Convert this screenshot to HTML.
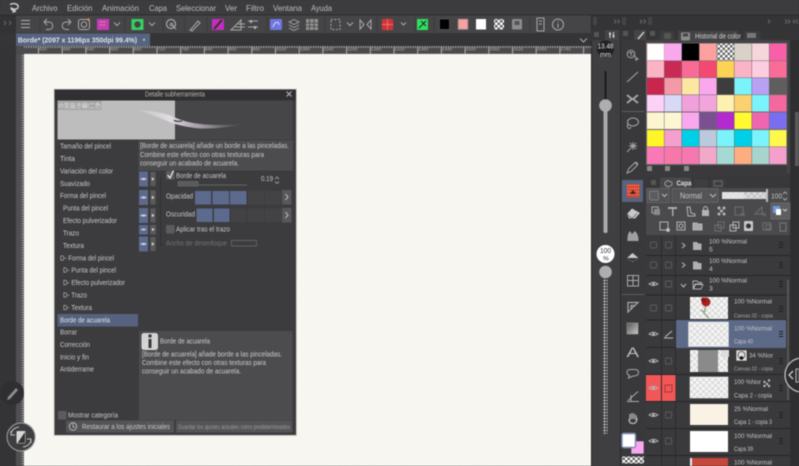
<!DOCTYPE html>
<html><head><meta charset="utf-8"><style>
html,body{margin:0;padding:0;background:#333;width:799px;height:466px;overflow:hidden}
svg{display:block;filter:blur(.5px)}
text{font-family:"Liberation Sans","Noto Sans CJK JP",sans-serif;font-size:7.5px;fill:#c8c8c8}
.m text{font-size:8.5px;fill:#bdbdbd}
.l text{font-size:7.2px;fill:#c8c8c8}
.d text{font-size:7.2px;fill:#cccccc}
.i{fill:none;stroke:#a8a8a8;stroke-width:1}
.r text{font-size:6.8px;fill:#c4c4c4}
.r .s{font-size:5.8px;fill:#aaa}
.t text{font-size:4.6px;fill:#b0b0b0}
</style></head><body>
<svg width="799" height="466" viewBox="0 0 799 466" xmlns="http://www.w3.org/2000/svg">
<defs>
<pattern id="ck" width="6" height="6" patternUnits="userSpaceOnUse"><rect width="6" height="6" fill="#f6f6f6"/><rect width="3" height="3" fill="#dcdcdc"/><rect x="3" y="3" width="3" height="3" fill="#dcdcdc"/></pattern>
<pattern id="ck2" width="5" height="5" patternUnits="userSpaceOnUse"><rect width="5" height="5" fill="#fff"/><rect width="2.5" height="2.5" fill="#666"/><rect x="2.5" y="2.5" width="2.5" height="2.5" fill="#666"/></pattern>
<pattern id="tick" width="2.37" height="8" patternUnits="userSpaceOnUse" x="38"><rect y="5.500" width=".9" height="2.500" fill="#b0b0b0"/></pattern>
<pattern id="tick2" width="23.7" height="8" patternUnits="userSpaceOnUse" x="38"><rect y="0" width="1" height="8" fill="#b4b4b4"/></pattern>
<pattern id="vt" width="8" height="2.4" patternUnits="userSpaceOnUse"><rect x="5.500" width="2.500" height=".9" fill="#a8a8a8"/></pattern>
<pattern id="bead" width="3" height="3" patternUnits="userSpaceOnUse"><rect width="3" height="3" fill="#444"/><circle cx="1.5" cy="1.5" r="1" fill="#ccc"/></pattern>
<linearGradient id="grd" x1="0" y1="0" x2="1" y2="1"><stop offset="0" stop-color="#555"/><stop offset="1" stop-color="#c8c8c8"/></linearGradient>
<linearGradient id="st" x1="0" y1="0" x2="1" y2="0"><stop offset="0" stop-color="#d8d6da" stop-opacity=".3"/><stop offset=".3" stop-color="#e2dce4"/><stop offset=".45" stop-color="#c0b4c4"/><stop offset=".7" stop-color="#8a868a"/><stop offset="1" stop-color="#5a5a5c" stop-opacity=".2"/></linearGradient>
<filter id="paper" x="0" y="0" width="100%" height="100%"><feTurbulence type="fractalNoise" baseFrequency=".7" numOctaves="2" seed="3"/><feColorMatrix values="0 0 0 0 .55 0 0 0 0 .52 0 0 0 0 .45 .5 0 0 0 -.12"/></filter>
<g id="eye"><path d="M-4.500 0Q0-3.500 4.500 0Q0 3 -4.500 0Z" fill="none" stroke="#b4b4b4" stroke-width=".9"/><circle r="1.300" fill="#b4b4b4"/></g>
<g id="cb"><rect x="-3" y="-3" width="6" height="6" rx="1" fill="none" stroke="#5a5a5c" stroke-width="1"/></g>
<g id="grip"><path d="M-2-2.500H2M-2 0H2M-2 2.500H2" stroke="#1e1e20" stroke-width="1.100"/></g>
<g id="ebtn"><rect x="-4.500" y="-7.500" width="9" height="15" fill="#5c6a8e"/><path d="M-3.500 0Q0-2.600 3.500 0Q0 2.400 -3.500 0Z" fill="#c8ccd8"/></g>
<g id="pbtn"><rect x="-3" y="-7.500" width="6" height="15" fill="#5a5a5c" stroke="#333" stroke-width=".5"/><path d="M-1.200-1.800L1.500 0L-1.200 1.800Z" fill="#ddd"/></g>
</defs>

<!-- base -->
<rect width="799" height="466" fill="#353537"/>
<rect x="0" y="0" width="799" height="15" fill="#3c3c3e"/>
<rect x="0" y="14.500" width="799" height="1" fill="#2c2c2c"/>
<rect x="0" y="15.500" width="591" height="18" fill="#454547"/>
<rect x="0" y="33" width="591" height="13" fill="#353537"/>
<rect x="0" y="46" width="16" height="420" fill="#343436"/>
<rect x="0" y="15.500" width="16" height="18" fill="#333335"/>

<!-- canvas -->
<rect x="24" y="54" width="567" height="412" fill="#faf8f3"/>
<rect x="24" y="54" width="567" height="412" filter="url(#paper)" opacity=".22"/>

<!-- rulers -->
<rect x="16" y="46" width="575" height="8" fill="#4b4b4d"/>
<rect x="24" y="46" width="567" height="8" fill="url(#tick)"/>
<rect x="24" y="46" width="567" height="8" fill="url(#tick2)"/>
<rect x="16" y="54" width="8" height="412" fill="#505052"/>
<rect x="16" y="54" width="8" height="412" fill="url(#vt)"/>
<g class="t">
<text x="39" y="50.500">420</text><text x="62.700" y="50.500">480</text><text x="86.400" y="50.500">540</text><text x="110.100" y="50.500">600</text><text x="133.800" y="50.500">660</text><text x="157.500" y="50.500">720</text><text x="181.200" y="50.500">780</text><text x="204.900" y="50.500">840</text><text x="228.600" y="50.500">900</text><text x="252.300" y="50.500">960</text><text x="276" y="50.500">1020</text><text x="299.700" y="50.500">1080</text><text x="323.400" y="50.500">1140</text><text x="347.100" y="50.500">1200</text><text x="370.800" y="50.500">1260</text><text x="394.500" y="50.500">1320</text><text x="418.200" y="50.500">1380</text><text x="441.900" y="50.500">1440</text><text x="465.600" y="50.500">1500</text><text x="489.300" y="50.500">1560</text><text x="513" y="50.500">1620</text><text x="536.700" y="50.500">1680</text><text x="560.400" y="50.500">1740</text>
</g>

<!-- logo -->
<path d="M10 4.500C14 2.500 19 4 18 7.500C17 10 12 9.500 11 7.500M11 7.500C11 9.500 13 11 16 11.500M15 8.500C15 11 14 12.500 12.500 12" fill="none" stroke="#d0d0d0" stroke-width="1.400"/>

<!-- menu -->
<g class="m">
<text x="32" y="11" textLength="25.500" lengthAdjust="spacingAndGlyphs">Archivo</text>
<text x="67" y="11" textLength="25.500" lengthAdjust="spacingAndGlyphs">Edición</text>
<text x="102" y="11" textLength="37" lengthAdjust="spacingAndGlyphs">Animación</text>
<text x="149" y="11" textLength="18" lengthAdjust="spacingAndGlyphs">Capa</text>
<text x="176" y="11" textLength="40" lengthAdjust="spacingAndGlyphs">Seleccionar</text>
<text x="225" y="11" textLength="12" lengthAdjust="spacingAndGlyphs">Ver</text>
<text x="246" y="11" textLength="18" lengthAdjust="spacingAndGlyphs">Filtro</text>
<text x="273" y="11" textLength="29" lengthAdjust="spacingAndGlyphs">Ventana</text>
<text x="311" y="11" textLength="21" lengthAdjust="spacingAndGlyphs">Ayuda</text>
</g>

<!-- toolbar separators -->
<path d="M40 17V32M125 17V32M163 17V32M185 17V32M207 17V32M267 17V32M325 17V32M377 17V32M415 17V32M434 17V32M530 17V32" stroke="#3b3b3d" stroke-width="1"/>
<path d="M21 20.500H30M21 24H30M21 27.500H30" stroke="#b0b0b0" stroke-width="1.100"/>
<g class="i">
<path d="M44 22L47 19M44 22L47 25M44 22H49C54 22 54 29.500 49 29.500H46"/>
<path d="M71 22L68 19M71 22L68 25M71 22H66C61 22 61 29.500 66 29.500H69"/>
<rect x="78.500" y="19.500" width="11" height="10" rx="2"/><circle cx="84" cy="24.500" r="2.800"/>
<path d="M114 22.500L117 25.500L120 22.500M149 22.500L152 25.500L155 22.500M347 22.500L350 25.500L353 22.500"/>
<circle cx="171" cy="24" r="4.500" stroke-width="1.200"/><path d="M172 25L176 29" stroke-width="1.200"/><circle cx="171.500" cy="24.500" r="1.300"/>
<path d="M190 30L193 27L198 21L200 23L195 28L192 31Z"/>
<path d="M231 30L241 20V30ZM235 27H245M238 24H245"/>
<path d="M248 21H258M248 27H258"/>
<path d="M289 22L294 19.500L299 22L294 24.500ZM289 25L294 27.500L299 25M289 28L294 30.500L299 28" stroke-width=".9"/>
<rect x="331" y="19.500" width="9" height="10" stroke-dasharray="2 1.500"/>
<path d="M360 20V29L364 24.500ZM371 20V29L367 24.500Z"/>
<path d="M401 22.500L403.500 25L406 22.500"/>
<rect x="537" y="18" width="7" height="13"/><path d="M539 21H542M539 24H542"/>
<circle cx="558" cy="24.500" r="5.500"/><path d="M558 23.500V28M558 21V22"/>
</g>
<circle cx="88.500" cy="19.500" r="1.300" fill="#e85"/>
<rect x="97" y="19" width="12" height="11" fill="#c53cb5"/><path d="M100 22H106M100 25H106" stroke="#e8c060" stroke-width="1" stroke-dasharray="1 1"/>
<rect x="131.500" y="19" width="12" height="11" fill="#35d060"/><circle cx="137.500" cy="24.500" r="3.200" fill="#454547"/>
<rect x="212" y="19" width="12" height="11" fill="#c52cc0"/><path d="M214 29L222 20" stroke="#332" stroke-width="2"/>
<rect x="250" y="20" width="2" height="3" fill="#b0b0b0"/><rect x="254" y="26" width="2" height="3" fill="#b0b0b0"/>
<rect x="270" y="19" width="12" height="11" rx="1.500" fill="#7076e0"/><path d="M273 27C275 21 279 21 279 25" stroke="#d8d8f8" fill="none"/>
<rect x="306" y="19" width="12" height="11" fill="#909090"/><path d="M309.500 19V30M314 19V30M306 23H318M306 26.500H318" stroke="#444" stroke-width=".8"/>
<rect x="382" y="19" width="11" height="11" fill="#d63236"/><path d="M382 24.500H393M387.500 19V30" stroke="#fff" stroke-dasharray=".8 1.200" stroke-width=".7"/>
<rect x="417" y="19" width="11" height="11" fill="#2fe060"/><path d="M419 28L426 21M421 21L426 26" stroke="#222" stroke-width="1"/>
<rect x="439.500" y="19" width="10" height="10.500" fill="#000" stroke="#555" stroke-width=".8"/>
<rect x="458" y="19" width="10" height="10.500" fill="#f5a2a0" stroke="#777" stroke-width=".8"/>
<rect x="476" y="19" width="10" height="10.500" fill="#fff"/>
<rect x="494" y="19" width="10" height="10.500" fill="url(#ck2)"/>
<rect x="512" y="19" width="10" height="10.500" rx="1" fill="#8c8c8c"/><rect x="514.500" y="21" width="5" height="4" fill="#555"/>

<!-- tab -->
<rect x="16" y="33.500" width="134" height="12.500" fill="#566480"/>
<text x="18" y="42.500" textLength="119" lengthAdjust="spacingAndGlyphs" style="fill:#dfe2e8;font-size:7.6px;font-weight:bold">Borde* (2097 x 1196px 350dpi 99.4%)</text>
<circle cx="144" cy="39.800" r="1" fill="#d8d8d8"/>
<path d="M580 38.500L583.500 42L587 38.500" fill="none" stroke="#aaa" stroke-width="1"/>
<path d="M4 21L6 23L4 25M9 21L11 23L9 25" fill="none" stroke="#666" stroke-width=".9"/>

<!-- right panels -->
<rect x="591" y="15.500" width="208" height="14.500" fill="#343436"/>
<path d="M614 19.500L616 21.500L614 23.500M617.500 19.500L619.500 21.500L617.500 23.500M640 19.500L642 21.500L640 23.500M643.500 19.500L645.500 21.500L643.500 23.500M768 19.500L770 21.500L768 23.500M785 19.500L787 21.500L785 23.500M788 19.500L790 21.500L788 23.500M795 19.500L793 21.500L795 23.500M798 19.500L796 21.500L798 23.500" fill="none" stroke="#777" stroke-width=".8"/>
<rect x="593" y="17" width="4" height="8" fill="#444"/><rect x="622" y="17" width="4" height="8" fill="#444"/><rect x="648" y="17" width="4" height="8" fill="#444"/>
<rect x="591" y="30" width="29" height="436" fill="#3f3f41"/>
<rect x="620" y="30" width="26" height="436" fill="#39393b"/>
<rect x="646" y="30" width="144" height="436" fill="#444446"/>
<rect x="790" y="30" width="9" height="436" fill="#2f2f31"/>
<rect x="795" y="112" width="4" height="54" fill="#5a5a5c"/>
<rect x="591" y="15.500" width="1" height="450" fill="#2a2a2a"/>
<rect x="620" y="30" width="1" height="436" fill="#2c2c2e"/>
<!-- top right tabs -->
<rect x="591" y="30" width="208" height="10" fill="#353537"/>
<rect x="594" y="32" width="5" height="5" fill="#555"/>
<rect x="605" y="30" width="14" height="10" fill="#444446"/>
<path d="M610 32V38M613.500 32V38" stroke="#ccc" stroke-width="1.100"/><rect x="609" y="33" width="2" height="2" fill="#ccc"/><rect x="612.500" y="35" width="2" height="2" fill="#ccc"/>
<rect x="623" y="31" width="5" height="5" fill="#555"/>
<rect x="634" y="30" width="12" height="10" fill="#444446"/><path d="M638 39L644 32" stroke="#ccc" stroke-width="1.500"/>
<rect x="650" y="31" width="5" height="5" fill="#555"/>
<path d="M660 40V33Q660 31 662 31H672Q674 31 674 33V40Z" fill="#3d3d3f"/><rect x="664" y="33" width="7" height="6" rx="1" fill="#555"/>
<path d="M678 40V31H738V40Z" fill="#444446"/><rect x="681" y="32.500" width="9" height="8" rx="1" fill="#8a8a8a"/><rect x="683" y="33.500" width="5" height="3" fill="#444"/>
<text x="695" y="38.500" textLength="46" lengthAdjust="spacingAndGlyphs" style="fill:#d4d4d4;font-size:7.500px">Historial de color</text>
<path d="M744 40V31H760V40Z" fill="#3d3d3f"/><rect x="747" y="33" width="9" height="5" fill="#777"/>

<!-- brush size -->
<circle cx="605.500" cy="49" r="8.500" fill="#202022"/>
<text x="597.500" y="48.500" textLength="16" lengthAdjust="spacingAndGlyphs" style="fill:#e8e8e8;font-size:7.500px">13.48</text>
<text x="600" y="57" textLength="11" lengthAdjust="spacingAndGlyphs" style="fill:#e8e8e8;font-size:7px">mm</text>
<rect x="604.500" y="71" width="2" height="35" fill="#1c1c1e"/>
<rect x="603.500" y="105" width="4" height="128" rx="1.500" fill="#aaa"/>
<circle cx="605.500" cy="105.500" r="6.300" fill="#aeaeae"/>
<circle cx="605.500" cy="254" r="9" fill="#fff"/>
<text x="600" y="253" textLength="11" lengthAdjust="spacingAndGlyphs" style="fill:#333;font-size:7.200px">100</text>
<text x="603" y="260.500" style="fill:#333;font-size:6.500px">%</text>
<circle cx="605.500" cy="272" r="6.300" fill="#aeaeae"/>
<rect x="603.500" y="278" width="4" height="156" rx="1.500" fill="url(#bead)"/>

<!-- tool column -->
<g class="i" stroke-width="1">
<circle cx="631" cy="54" r="3.800" stroke-width="1"/><path d="M629 52.500H633M631 52.500V56M633 55L638 59L635.500 59L636.500 61" stroke-width=".9"/>
<path d="M627 82L638 72"/>
<path d="M627 95L632 99L627 103M638 95L633 99L638 103M632 99H633" stroke-width="1.800"/>
<ellipse cx="633" cy="122" rx="5.500" ry="4" stroke-width="1"/><path d="M628 124C626 128 630 130 631 127"/>
<path d="M627 152L632 147M633 142V150M629 146H637M630 143L636 149M636 143L630 149" stroke-width=".9"/>
<path d="M627 173L628.500 169L635 162.500L637.500 165L631 171.500ZM636 162L638 164"/>
<path d="M622 111.500H644" stroke="#5d5d5f"/>
<path d="M622 294.500H644" stroke="#5d5d5f"/>
<rect x="627.500" y="275.500" width="11" height="10.500"/><path d="M627.500 280.500H638.500M633 275.500V286"/>
<path d="M628 312V302.500H638ZM631 309V305.500H634.500" stroke-width="1.200"/>
<path d="M627 401.500H639M628 400.500L638 391.500M631 401V395"/>
<path d="M630.500 369.500L635 369.500Q638.500 369.500 638.500 372.500Q638.500 376 633 376L628.500 378L629.500 375.500Q627 374.500 627 372.500Q627 369.500 630.500 369.500Z"/>
</g>
<rect x="622" y="180" width="21" height="22" fill="#566480"/>
<rect x="627" y="184" width="12.500" height="13.500" fill="#d8452e"/>
<path d="M627 185.500H639M627 188.500H639M627 191.500H639M627 194.500H639" stroke="#f2c0a8" stroke-width=".8" stroke-dasharray="1 1.200"/>
<path d="M630 194L633 190L636 194Z" fill="#3a2220"/>
<path d="M627 214L632 208.500L640 213L635 218.500H629Z" fill="#c8c8c8"/><path d="M627 214L632 218.500L637 213.500" fill="none" stroke="#555" stroke-width=".7"/>
<path d="M627.500 241Q627 234 630 231L632 234L635 231Q639 235 638.500 241Z" fill="#a0a0a0"/>
<path d="M627 258L632.500 253L638.500 258Z" fill="#c8c8c8"/><path d="M627 258.500Q632.500 264 638.500 258.500L632.500 262Z" fill="#aaa"/>
<rect x="627" y="323" width="11" height="11" fill="url(#grd)" stroke="#aaa" stroke-width=".5"/>
<text x="626.500" y="357" textLength="12.500" lengthAdjust="spacingAndGlyphs" style="font-size:14px;fill:#c0c0c0">A</text>
<path d="M630 420L630 414M632 419V413M634 419V413.500M636 420V415M629 419Q629 423.500 633 423.500Q637 423.500 637 418" fill="none" stroke="#b4b4b4" stroke-width="1.300"/>
<rect x="622" y="433.500" width="13.500" height="14" rx="1.500" fill="#fff" stroke="#7d8ab0" stroke-width="1.400"/>
<rect x="631" y="441" width="13" height="13" fill="#f9a8f0" stroke="#3a3a3a" stroke-width=".6"/>
<rect x="622" y="433.500" width="13.500" height="14" rx="1.500" fill="#fff" stroke="#7d8ab0" stroke-width="1.400"/>
<rect x="622" y="456.500" width="22" height="7" fill="url(#ck2)"/>

<!-- palette -->
<rect x="646" y="43" width="141" height="122" fill="#6a6a6a"/>
<g>
<rect x="647" y="43.500" width="17.200" height="17" fill="#ffffff" stroke="#d0a0a0" stroke-width=".6"/><rect x="664.500" y="43.500" width="17" height="17" fill="#f9a8ee"/><rect x="682" y="43.500" width="17" height="17" fill="#000"/><rect x="699.500" y="43.500" width="17" height="17" fill="#fca0a0"/><rect x="717" y="43.500" width="17" height="17" fill="url(#ck2)"/><rect x="734.500" y="43.500" width="17" height="17" fill="#d8d2c8"/><rect x="752" y="43.500" width="17" height="17" fill="#f6d6da"/><rect x="769.500" y="43.500" width="17" height="17" fill="#f85fa8"/>
<rect x="647" y="61" width="17" height="16.500" fill="#fdb3c6"/><rect x="664.500" y="61" width="17" height="16.500" fill="#c92a55"/><rect x="682" y="61" width="17" height="16.500" fill="#f96b96"/><rect x="699.500" y="61" width="17" height="16.500" fill="#f3486f"/><rect x="717" y="61" width="17" height="16.500" fill="#fcd354"/><rect x="734.500" y="61" width="17" height="16.500" fill="#fbb3c8"/><rect x="752" y="61" width="17" height="16.500" fill="#fccde0"/><rect x="769.500" y="61" width="17" height="16.500" fill="#fa6c98"/>
<rect x="647" y="78" width="17" height="16.500" fill="#c9254f"/><rect x="664.500" y="78" width="17" height="16.500" fill="#f598a8"/><rect x="682" y="78" width="17" height="16.500" fill="#fbe79f"/><rect x="699.500" y="78" width="17" height="16.500" fill="#f9a8ee"/><rect x="717" y="78" width="17" height="16.500" fill="#3d3d3d"/><rect x="734.500" y="78" width="17" height="16.500" fill="#7bf3fb"/><rect x="752" y="78" width="17" height="16.500" fill="#b8a0f3"/><rect x="769.500" y="78" width="17" height="16.500" fill="#5e5e5e"/>
<rect x="647" y="95" width="17" height="16.500" fill="#fdd0f7"/><rect x="664.500" y="95" width="17" height="16.500" fill="#d8d8f7"/><rect x="682" y="95" width="17" height="16.500" fill="#f0a0da"/><rect x="699.500" y="95" width="17" height="16.500" fill="#f2a4dc"/><rect x="717" y="95" width="17" height="16.500" fill="#fdf0b0"/><rect x="734.500" y="95" width="17" height="16.500" fill="#fbd06f"/><rect x="752" y="95" width="17" height="16.500" fill="#7bf3fb"/><rect x="769.500" y="95" width="17" height="16.500" fill="#f5679f"/>
<rect x="647" y="112.500" width="17" height="16.500" fill="#fdf5d0"/><rect x="664.500" y="112.500" width="17" height="16.500" fill="#fdf6d2"/><rect x="682" y="112.500" width="17" height="16.500" fill="#f9a8ee"/><rect x="699.500" y="112.500" width="17" height="16.500" fill="#7a5190"/><rect x="717" y="112.500" width="17" height="16.500" fill="#b52ad0"/><rect x="734.500" y="112.500" width="17" height="16.500" fill="#fffb30"/><rect x="752" y="112.500" width="17" height="16.500" fill="#ef66b0"/><rect x="769.500" y="112.500" width="17" height="16.500" fill="#7b6df0"/>
<rect x="647" y="130" width="17" height="16.500" fill="#fff62a"/><rect x="664.500" y="130" width="17" height="16.500" fill="#f49fcd"/><rect x="682" y="130" width="17" height="16.500" fill="#00cfe8"/><rect x="699.500" y="130" width="17" height="16.500" fill="#bcc8dc"/><rect x="717" y="130" width="17" height="16.500" fill="#7bf3fb"/><rect x="734.500" y="130" width="17" height="16.500" fill="#00cfe8"/><rect x="752" y="130" width="17" height="16.500" fill="#7bf3fb"/><rect x="769.500" y="130" width="17" height="16.500" fill="#fff84c"/>
<rect x="647" y="147" width="17" height="17" fill="#fa78b8"/><rect x="664.500" y="147" width="17" height="17" fill="#f778a8"/><rect x="682" y="147" width="17" height="17" fill="#f778b0"/><rect x="699.500" y="147" width="17" height="17" fill="#f2a8c8"/><rect x="717" y="147" width="17" height="17" fill="#a6d8d4"/><rect x="734.500" y="147" width="17" height="17" fill="#fdae80"/><rect x="752" y="147" width="17" height="17" fill="#a8d4ce"/><rect x="769.500" y="147" width="17" height="17" fill="#f5a0cc"/>
</g>
<rect x="646" y="165" width="141" height="8" fill="#3a3a3c"/>
<rect x="647" y="166" width="5" height="5" fill="#888"/><rect x="665" y="166" width="5" height="5" fill="#888"/><rect x="684" y="166" width="5" height="5" fill="#888"/>
<rect x="646" y="173" width="144" height="4" fill="#3a3a3c"/>

<!-- layer panel -->
<rect x="646" y="177" width="144" height="11" fill="#38383a"/>
<path d="M660 188V179Q660 177.500 662 177.500H691V188Z" fill="#48484a"/>
<path d="M665 182.500L668 180.500L672 182.500V185L668 187L665 185Z" fill="none" stroke="#aaa" stroke-width=".8"/>
<text x="676.500" y="185.500" textLength="15" lengthAdjust="spacingAndGlyphs" style="font-size:7.500px;font-weight:bold;fill:#ddd">Capa</text>
<rect x="651" y="180" width="5" height="5" fill="#555"/>
<rect x="694" y="179" width="14" height="9" rx="2" fill="#3e3e40"/><rect x="711" y="179" width="14" height="9" rx="2" fill="#3e3e40"/><rect x="714" y="181" width="8" height="5" fill="none" stroke="#777" stroke-width=".8"/>
<rect x="646" y="188" width="144" height="47" fill="#4a4a4c"/>
<rect x="647" y="188.500" width="22" height="14" fill="#525254" stroke="#6a6a6c" stroke-width=".7"/>
<rect x="649.500" y="191" width="9" height="9" rx="1" fill="#5c5c5e" stroke="#8a8a8a" stroke-width=".8"/>
<path d="M662 194L664.500 196.500L667 194" fill="none" stroke="#c4c4c4" stroke-width=".9"/>
<rect x="672" y="188.500" width="46" height="14" fill="#545456" stroke="#6a6a6c" stroke-width=".7"/>
<text x="680" y="198.500" textLength="22" lengthAdjust="spacingAndGlyphs" style="font-size:8px;fill:#c8c8c8">Normal</text>
<path d="M710 194L713 197L716 194" fill="none" stroke="#c4c4c4" stroke-width=".9"/>
<rect x="722" y="192" width="45" height="7" fill="url(#ck)" opacity=".85"/>
<rect x="722" y="192" width="22" height="7" fill="#e8e8e8" opacity=".7"/>
<rect x="766" y="189" width="2" height="13" fill="#bbb"/>
<text x="771" y="198.500" textLength="11" lengthAdjust="spacingAndGlyphs" style="font-size:7.500px">100</text>
<path d="M783 194L785 192L787 194M783 198L785 200L787 198" fill="none" stroke="#bbb" stroke-width=".8"/>
<g fill="#9f9f9f">
<rect x="652" y="207" width="6" height="6" fill="none" stroke="#aaa" stroke-width="1"/><rect x="654" y="209" width="6" height="6" fill="#8a8a8a"/>
<path d="M668 207H677V209H673.500V216H672V209H668Z" fill="#aaa"/>
<path d="M687 207H690L691 213L695 214V216H688Z" fill="none" stroke="#b4b4b4"/>
<rect x="702" y="210" width="7" height="6" fill="#b4b4b4"/><path d="M703.500 210V208Q705.500 205 707.500 208V210" fill="none" stroke="#b4b4b4"/>
<circle cx="719" cy="208" r="1.500" fill="#b4b4b4"/><circle cx="724" cy="208" r="1.500" fill="#b4b4b4"/><circle cx="719" cy="214" r="1.500" fill="#b4b4b4"/><circle cx="724" cy="214" r="1.500" fill="#b4b4b4"/><circle cx="721.500" cy="211" r="1.500" fill="#b4b4b4"/>
</g>
<rect x="735" y="207" width="8" height="8" fill="none" stroke="#6e6e70" stroke-width="1"/><path d="M741 213L745 216M745 213L741 216" stroke="#6e6e70"/>
<path d="M755 214L762 207V214ZM762 213L766 216M766 213L762 216" fill="none" stroke="#6e6e70"/>
<rect x="771" y="203" width="19" height="16" fill="#5e5e60" stroke="#777" stroke-width=".6"/>
<rect x="773" y="206" width="7" height="7" fill="#6d9ae0"/><rect x="776" y="209" width="5" height="6" fill="#fff"/><path d="M783 209L785 211L787 209" fill="none" stroke="#ccc"/>
<g fill="none" stroke="#b4b4b4" stroke-width="1">
<rect x="660" y="222" width="8" height="8"/><circle cx="668" cy="230" r="1.500" fill="#ccc"/>
<rect x="677" y="222" width="8" height="8"/><circle cx="681" cy="226" r="2"/>
<path d="M693 223H697L698 224H702V230H693Z" fill="#a8a8a8"/>
<rect x="718" y="222" width="6" height="6" stroke="#6e6e70"/><rect x="715" y="225" width="6" height="6" stroke="#6e6e70"/>
<rect x="733" y="222" width="6" height="6"/><rect x="730" y="225" width="6" height="6"/>
<rect x="744" y="221" width="9" height="10" rx="1" fill="#c8c8c8" stroke="none"/><circle cx="748.500" cy="226" r="2.500" fill="#333" stroke="none"/>
<rect x="763" y="223" width="8" height="7" stroke="#6e6e70"/><rect x="766" y="225" width="4" height="4" stroke="#6e6e70"/>
<path d="M779 223H787M780 224V231H786V224" stroke="#7a7a7c"/>
</g>

<!-- layer rows -->
<rect x="646" y="235" width="144" height="231" fill="#3a3a3c"/>
<path d="M646 255.500H790M646 275.500H790M646 295H790M646 320H790M646 347.500H790M646 374.500H790M646 401.500H790M646 428.500H790M646 455.500H790" stroke="#262628" stroke-width="1"/>
<path d="M661.500 235V466M675.500 235V466" stroke="#2a2a2c" stroke-width="1"/>
<rect x="646" y="375" width="15" height="26" fill="#f15757"/><rect x="662" y="375" width="13.500" height="26" fill="#f15757"/>
<rect x="676" y="320" width="110" height="28" fill="#5c6a88"/>
<use href="#cb" x="653.500" y="245"/><use href="#cb" x="668.500" y="245"/>
<use href="#cb" x="653.500" y="265"/><use href="#cb" x="668.500" y="265"/>
<use href="#eye" x="653.500" y="284"/><use href="#cb" x="668.500" y="284"/>
<use href="#cb" x="653.500" y="308"/><use href="#cb" x="668.500" y="308"/>
<use href="#eye" x="653.500" y="334"/>
<path d="M664 338H673M665 337L672 331" stroke="#bdbdbd" stroke-width="1" fill="none"/>
<use href="#eye" x="653.500" y="361"/><use href="#cb" x="668.500" y="361"/>
<use href="#eye" x="653.500" y="388"/>
<rect x="665" y="385" width="7" height="7" fill="none" stroke="#7a2020" stroke-width=".9" stroke-dasharray="1.200 .8"/>
<use href="#eye" x="653.500" y="415"/><use href="#cb" x="668.500" y="415"/>
<use href="#eye" x="653.500" y="441"/><use href="#cb" x="668.500" y="441"/>
<g fill="none" stroke="#bbb" stroke-width="1">
<path d="M682 243L685 245.500L682 248M682 262.500L685 265L682 267.500M681 284L683.500 287L686 284"/>
</g>
<path d="M693 242H697L698.500 243.500H701.500V250H693Z" fill="#b0b0b0"/>
<path d="M693 261.500H697L698.500 263H701.500V269.500H693Z" fill="#b0b0b0"/>
<path d="M693 281H697L698.500 282.500H701.500V284H695L693 289ZM695.500 284.500H703L701 289H693.500Z" fill="none" stroke="#b0b0b0" stroke-width=".9"/>

<g class="r">
<text x="709" y="243.500" textLength="38" lengthAdjust="spacingAndGlyphs">100 %Normal</text><text x="709" y="251.500">5</text>
<text x="709" y="263" textLength="38" lengthAdjust="spacingAndGlyphs">100 %Normal</text><text x="709" y="271">4</text>
<text x="709" y="282.500" textLength="38" lengthAdjust="spacingAndGlyphs">100 %Normal</text><text x="709" y="290.500">3</text>
<text x="734" y="303.500" textLength="38" lengthAdjust="spacingAndGlyphs">100 %Normal</text><text class="s" x="734" y="317.500" textLength="39" lengthAdjust="spacingAndGlyphs">Canvas 02 - copia</text>
<text x="734" y="330.500" textLength="38" lengthAdjust="spacingAndGlyphs">100 %Normal</text><text x="734" y="343.500" textLength="19" lengthAdjust="spacingAndGlyphs">Capa 40</text>
<text x="749" y="357.500" textLength="24" lengthAdjust="spacingAndGlyphs">34 %Nor</text><text class="s" x="734" y="370.500" textLength="39" lengthAdjust="spacingAndGlyphs">Canvas 02 - copia</text>
<text x="734" y="384" textLength="27" lengthAdjust="spacingAndGlyphs">100 %Nor</text><text x="734" y="397.500" textLength="38" lengthAdjust="spacingAndGlyphs">Capa 2 - copia</text>
<text x="734" y="411" textLength="34" lengthAdjust="spacingAndGlyphs">25 %Normal</text><text x="734" y="424" textLength="38" lengthAdjust="spacingAndGlyphs">Capa 1 - copia 3</text>
<text x="734" y="438" textLength="38" lengthAdjust="spacingAndGlyphs">100 %Normal</text><text x="734" y="451" textLength="19" lengthAdjust="spacingAndGlyphs">Capa 39</text>
<text x="734" y="464.500" textLength="38" lengthAdjust="spacingAndGlyphs">100 %Normal</text>
</g>
<use href="#grip" x="781" y="245"/><use href="#grip" x="781" y="265"/><use href="#grip" x="781" y="284"/><use href="#grip" x="781" y="309"/><use href="#grip" x="781" y="334"/><use href="#grip" x="781" y="361"/><use href="#grip" x="781" y="388"/><use href="#grip" x="781" y="415"/><use href="#grip" x="781" y="441"/>
<rect x="787" y="280" width="2" height="120" fill="#555"/>

<!-- thumbs -->
<rect x="690" y="297" width="38" height="22" fill="url(#ck)"/>
<circle cx="706" cy="302" r="4.500" fill="#a82020"/><circle cx="703.500" cy="300" r="2.500" fill="#8a1818"/><path d="M706 306L704 313L709 318M704 312L701 310" stroke="#8a9a70" stroke-width="1.200" fill="none"/>
<rect x="689" y="322.500" width="39" height="23.500" fill="url(#ck)" stroke="#eee" stroke-width="1.400"/>
<rect x="690" y="350" width="38" height="22" fill="url(#ck)"/><rect x="698" y="350" width="20" height="22" fill="#8a8a8a"/>
<rect x="721" y="350" width="8" height="7" fill="#ddd"/>
<rect x="736" y="350" width="11" height="11" fill="#ddd" stroke="#222" stroke-width=".5"/><circle cx="741.500" cy="355" r="3.500" fill="none" stroke="#666"/><circle cx="741.500" cy="358" r="1.800" fill="#111"/>
<rect x="690" y="377" width="38" height="21" fill="url(#ck)" stroke="#fff" stroke-width=".5"/>
<circle cx="764.500" cy="382" r="1.200" fill="#bbb"/><circle cx="769" cy="380.500" r="1.200" fill="#bbb"/><circle cx="767" cy="384" r="1.200" fill="#bbb"/><circle cx="764.500" cy="386" r="1.200" fill="#bbb"/><circle cx="769" cy="386" r="1.200" fill="#bbb"/>
<rect x="690" y="404" width="38" height="21" fill="#f9f2e5"/>
<rect x="690" y="431" width="38" height="21" fill="#fff"/>
<rect x="690" y="458" width="38" height="8" fill="#c4483c"/><rect x="690" y="458" width="2" height="8" fill="#eee"/>

<!-- right handle -->
<circle cx="802" cy="375" r="17" fill="#2e2e30" stroke="#c8c8c8" stroke-width="1.200"/>
<path d="M793 371L789 375L793 379" fill="none" stroke="#ccc" stroke-width="1.300"/>
<rect x="796" y="369" width="3" height="13" fill="none" stroke="#bbb"/>

<!-- left floating -->
<circle cx="12" cy="393" r="12" fill="#2f2f31"/>
<path d="M7 400L8 397L16 388L18 390L10 399Z" fill="#8c8c8c"/>
<circle cx="21" cy="437" r="14.500" fill="#3e3e40"/>
<circle cx="21" cy="437" r="14" fill="none" stroke="#a0a0a0" stroke-width="1"/>
<rect x="16.500" y="431" width="9" height="12.500" rx="1" fill="#d8d8d8"/><path d="M17.500 443L25 432V443Z" fill="#333"/>
<path d="M11 434Q12 428 19 427M31 440Q30 446 23 447M11 431V435H15M31 443V439H27" fill="none" stroke="#c0c0c0" stroke-width="1"/>

<!-- dialog -->
<rect x="53.500" y="88.500" width="243.500" height="347.500" fill="#d4d2cc"/>
<rect x="54.500" y="89.500" width="241.500" height="345.500" fill="#3c3c3e"/>
<rect x="54.500" y="89.500" width="241.500" height="11" fill="#303032"/>
<text x="145" y="96.500" textLength="60" lengthAdjust="spacingAndGlyphs" style="font-size:7px;fill:#b8b8b8">Detalle subherramienta</text>
<path d="M286.500 91.500L291.500 96.500M291.500 91.500L286.500 96.500" stroke="#bbb" stroke-width="1"/>
<rect x="57.500" y="100.500" width="235" height="39" fill="#464648"/>
<rect x="57.500" y="100.500" width="117.500" height="39" fill="#bdbdbd"/>
<rect x="57.500" y="100.500" width="44" height="9.500" fill="#a6a6a6"/>
<text x="58" y="108" textLength="43" lengthAdjust="spacingAndGlyphs" style="font-size:6px;fill:#e4e4e4">の気抜き線/二色</text>
<path d="M138 110Q158 111 172 116Q188 125 220 125Q232 125 244 124Q222 129 200 128.500Q184 127 172 123Q156 116 138 110Z" fill="url(#st)"/>
<path d="M174 120.500Q178 122 182 121" stroke="#302028" stroke-width="1" fill="none"/>
<rect x="138.500" y="140.500" width="154.500" height="30" fill="#4c4c4e"/>
<g class="d">
<text x="140" y="148" textLength="149" lengthAdjust="spacingAndGlyphs">[Borde de acuarela] añade un borde a las pinceladas.</text>
<text x="140" y="157" textLength="124" lengthAdjust="spacingAndGlyphs">Combine este efecto con otras texturas para</text>
<text x="140" y="165.500" textLength="99" lengthAdjust="spacingAndGlyphs">conseguir un acabado de acuarela.</text>
</g>

<rect x="57.500" y="314" width="80.500" height="12.500" fill="#56627e"/>
<g class="l">
<text x="60" y="148.500" textLength="51" lengthAdjust="spacingAndGlyphs">Tamaño del pincel</text>
<text x="60" y="161" textLength="15" lengthAdjust="spacingAndGlyphs">Tinta</text>
<text x="60" y="173.500" textLength="53" lengthAdjust="spacingAndGlyphs">Variación del color</text>
<text x="60" y="186" textLength="30" lengthAdjust="spacingAndGlyphs">Suavizado</text>
<text x="60" y="198" textLength="46" lengthAdjust="spacingAndGlyphs">Forma del pincel</text>
<text x="63" y="210.500" textLength="45" lengthAdjust="spacingAndGlyphs">Punta del pincel</text>
<text x="63" y="223" textLength="54" lengthAdjust="spacingAndGlyphs">Efecto pulverizador</text>
<text x="63" y="235.500" textLength="16" lengthAdjust="spacingAndGlyphs">Trazo</text>
<text x="63" y="248" textLength="21" lengthAdjust="spacingAndGlyphs">Textura</text>
<text x="60" y="260.500" textLength="54" lengthAdjust="spacingAndGlyphs">D- Forma del pincel</text>
<text x="63" y="272.500" textLength="53" lengthAdjust="spacingAndGlyphs">D- Punta del pincel</text>
<text x="63" y="285" textLength="62" lengthAdjust="spacingAndGlyphs">D- Efecto pulverizador</text>
<text x="63" y="297.500" textLength="24" lengthAdjust="spacingAndGlyphs">D- Trazo</text>
<text x="63" y="310" textLength="29" lengthAdjust="spacingAndGlyphs">D- Textura</text>
<text x="60" y="322.500" textLength="50" lengthAdjust="spacingAndGlyphs" style="fill:#e0e2e8">Borde de acuarela</text>
<text x="60" y="334.500" textLength="17" lengthAdjust="spacingAndGlyphs">Borrar</text>
<text x="60" y="347" textLength="30" lengthAdjust="spacingAndGlyphs">Corrección</text>
<text x="60" y="359.500" textLength="29" lengthAdjust="spacingAndGlyphs">Inicio y fin</text>
<text x="60" y="371.500" textLength="34" lengthAdjust="spacingAndGlyphs">Antiderrame</text>
</g>

<!-- eye/pass buttons -->
<use href="#ebtn" x="143.500" y="179"/><use href="#pbtn" x="153" y="179"/>
<use href="#ebtn" x="143.500" y="197.500"/><use href="#pbtn" x="153" y="197.500"/>
<use href="#ebtn" x="143.500" y="215.500"/><use href="#pbtn" x="153" y="215.500"/>
<rect x="139" y="225" width="9" height="9.500" fill="#5c6a8e"/><path d="M140.500 229.500Q143.500 227.500 146.500 229.500Q143.500 231.500 140.500 229.500Z" fill="#c8ccd8"/><rect x="150" y="225" width="6" height="9.500" fill="#5a5a5c"/><path d="M152 228L155 229.500L152 231Z" fill="#ddd"/>
<use href="#ebtn" x="143.500" y="244"/><use href="#pbtn" x="153" y="244"/>
<path d="M160.500 178V245M160.500 178H163M160.500 245H163" stroke="#2e2e30" stroke-width=".8" fill="none"/>

<!-- settings -->
<rect x="166" y="171" width="8.500" height="8.500" rx="1" fill="#5c5c5e"/>
<path d="M167.500 175L170 178L173.500 170.500" fill="none" stroke="#eee" stroke-width="1.200"/>
<text x="176" y="178" textLength="50" lengthAdjust="spacingAndGlyphs" style="font-size:7.200px">Borde de acuarela</text>
<rect x="178" y="181.500" width="20" height="4.500" fill="#5a5a5c" stroke="#777" stroke-width=".5"/>
<rect x="198" y="184.500" width="49" height="1" fill="#666"/>
<text x="261" y="181" textLength="12" lengthAdjust="spacingAndGlyphs" style="font-size:7.500px">0.19</text>
<path d="M275 179L277 177L279 179M275 181.500L277 183.500L279 181.500" fill="none" stroke="#bbb" stroke-width=".7"/>
<text x="166" y="198.500" textLength="27" lengthAdjust="spacingAndGlyphs">Opacidad</text>
<text x="166" y="216.500" textLength="29" lengthAdjust="spacingAndGlyphs">Oscuridad</text>
<g fill="#5c6a8e">
<rect x="195" y="191" width="16" height="13.500"/><rect x="212.500" y="191" width="16.500" height="13.500"/><rect x="230" y="191" width="16.500" height="13.500"/>
<rect x="196.500" y="208.500" width="16" height="13.500"/><rect x="214" y="208.500" width="15.500" height="13.500"/>
</g>
<g fill="#434345">
<rect x="248" y="191" width="16" height="13.500"/><rect x="265" y="191" width="16" height="13.500"/>
<rect x="231" y="208.500" width="15.500" height="13.500"/><rect x="248" y="208.500" width="16" height="13.500"/><rect x="265" y="208.500" width="16" height="13.500"/>
</g>
<rect x="282" y="190" width="9.500" height="14.500" fill="#58585a"/><rect x="282" y="208" width="9.500" height="14.500" fill="#58585a"/>
<path d="M285.500 194L288 197L285.500 200M285.500 212L288 215L285.500 218" fill="none" stroke="#ccc" stroke-width=".9"/>
<rect x="166" y="225" width="8.500" height="8.500" rx="1" fill="#5c5c5e"/>
<text x="176" y="231.500" textLength="54" lengthAdjust="spacingAndGlyphs">Aplicar tras el trazo</text>
<text x="166" y="245.500" textLength="61" lengthAdjust="spacingAndGlyphs" style="fill:#727274">Ancho de desenfoque</text>
<rect x="231.500" y="240.500" width="25" height="5.500" fill="none" stroke="#6a6a6c" stroke-width=".8"/>

<!-- info -->
<rect x="139" y="331" width="153.500" height="89" fill="#4c4c4e"/>
<rect x="141.500" y="333" width="16.500" height="17" rx="2.500" fill="#d4d4d4"/>
<rect x="148.500" y="339" width="3" height="9" fill="#3a3a3c"/><circle cx="150" cy="336" r="1.700" fill="#3a3a3c"/>
<g class="d">
<text x="160" y="343.500" textLength="50" lengthAdjust="spacingAndGlyphs">Borde de acuarela</text>
<text x="142" y="356.500" textLength="140" lengthAdjust="spacingAndGlyphs">[Borde de acuarela] añade borde a las pinceladas.</text>
<text x="142" y="365" textLength="124" lengthAdjust="spacingAndGlyphs">Combine este efecto con otras texturas para</text>
<text x="142" y="373.500" textLength="99" lengthAdjust="spacingAndGlyphs">conseguir un acabado de acuarela.</text>
</g>

<!-- bottom -->
<rect x="58" y="411" width="8.500" height="8.500" fill="#5c5c5e"/>
<text x="68" y="417.500" textLength="50" lengthAdjust="spacingAndGlyphs">Mostrar categoría</text>
<rect x="66" y="420.500" width="108" height="12" rx="1" fill="#545456"/>
<circle cx="73" cy="426.500" r="3.700" fill="none" stroke="#ccc" stroke-width=".8"/><path d="M73 424V427H75" fill="none" stroke="#ccc" stroke-width=".7"/>
<text x="82" y="429" textLength="88" lengthAdjust="spacingAndGlyphs" style="font-size:7.500px;fill:#c8c8c8">Restaurar a los ajustes iniciales</text>
<rect x="176" y="420.500" width="116.500" height="12" rx="1" fill="#545456"/>
<text x="178" y="429" textLength="112" lengthAdjust="spacingAndGlyphs" style="font-size:6.800px;fill:#9c9c9c">Guardar los ajustes actuales como predeterminados</text>
</svg>
</body></html>
